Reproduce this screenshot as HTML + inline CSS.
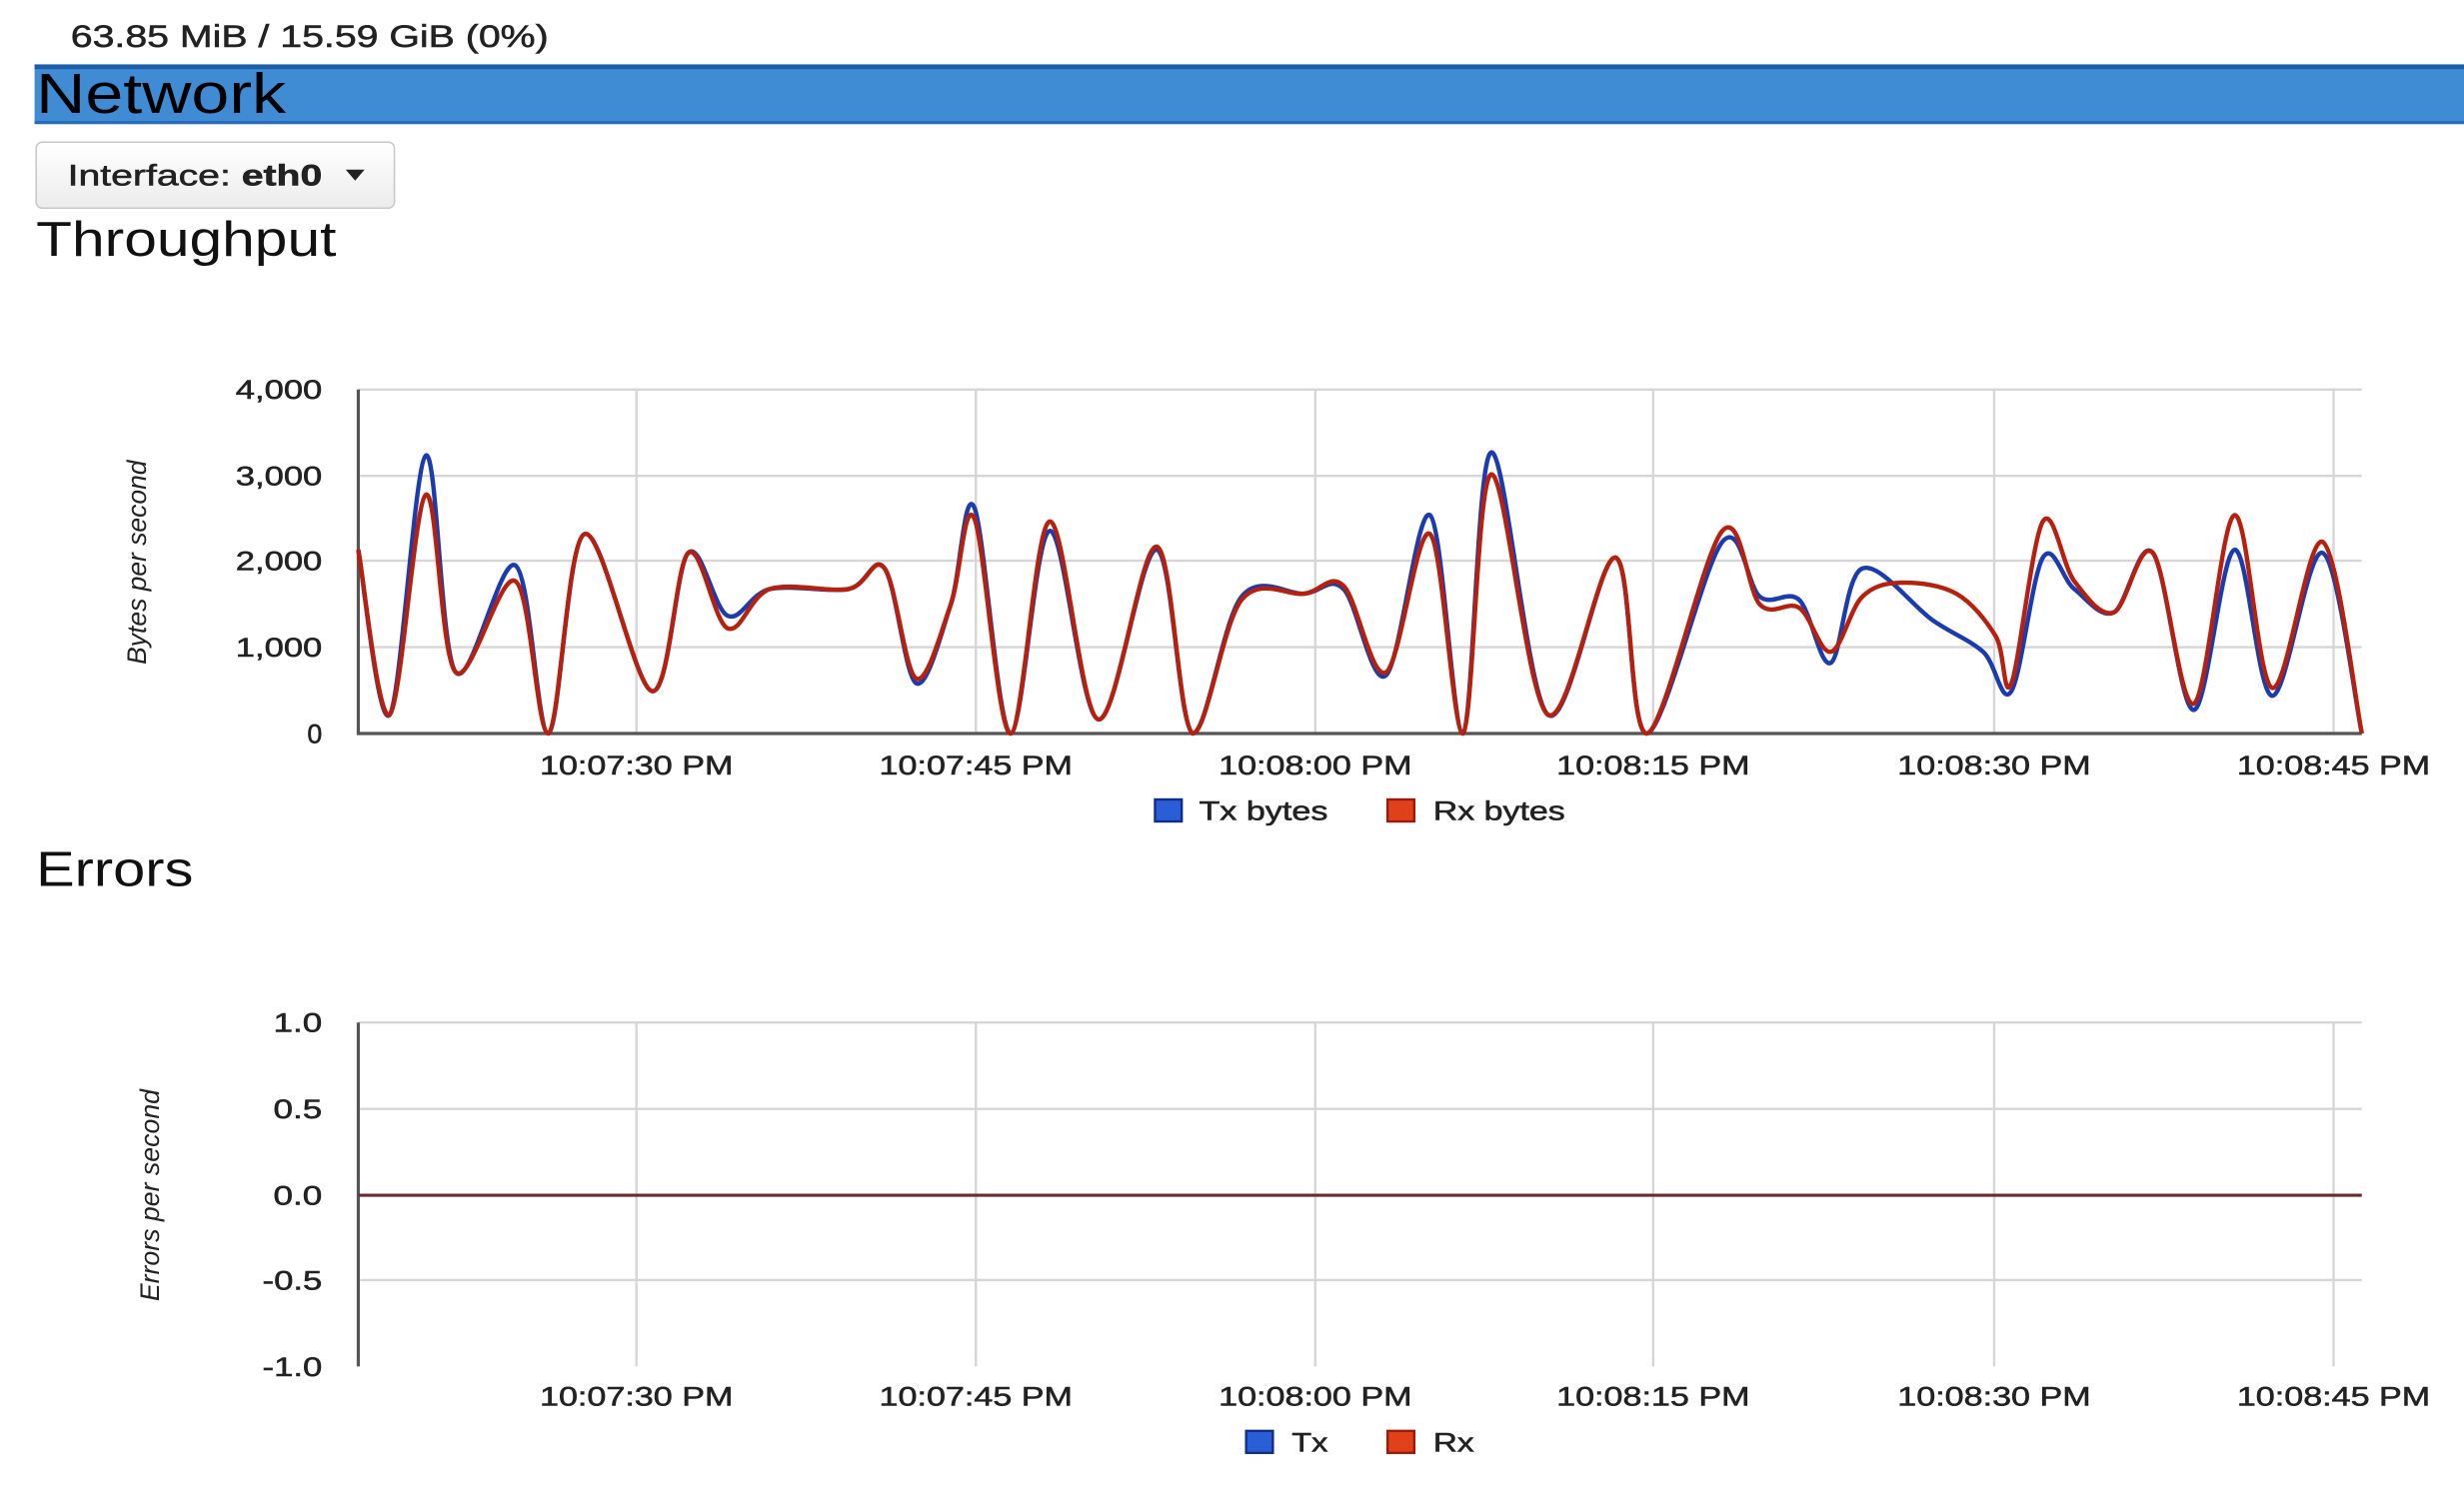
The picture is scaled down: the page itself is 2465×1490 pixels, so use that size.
<!DOCTYPE html>
<html><head><meta charset="utf-8"><style>
html,body{margin:0;padding:0;background:#fff;width:2465px;height:1490px;overflow:hidden}
svg{display:block}
text{font-family:"Liberation Sans",sans-serif}
.b{stroke:#222;stroke-width:0.35}
</style></head><body>
<svg id="s" width="2465" height="1490" viewBox="0 0 1568 948" preserveAspectRatio="none">
<defs><linearGradient id="bg" x1="0" y1="0" x2="0" y2="1"><stop offset="0" stop-color="#ffffff"/><stop offset="1" stop-color="#ececec"/></linearGradient></defs>
<text class="b" x="45" y="30" font-size="20" fill="#222" textLength="304" lengthAdjust="spacingAndGlyphs">63.85 MiB / 15.59 GiB (0%)</text>
<rect x="22" y="41" width="1546" height="38" fill="#3f8cd4"/>
<rect x="22" y="41" width="1546" height="3" fill="#1d5ea8"/>
<rect x="22" y="77" width="1546" height="2" fill="#2a6cb5"/>
<text x="23" y="72" font-size="36" fill="#000" textLength="159" lengthAdjust="spacingAndGlyphs">Network</text>
<rect x="23" y="90.5" width="228" height="42" rx="4" fill="url(#bg)" stroke="#c8c8c8"/>
<text class="b" x="43" y="118" font-size="19" fill="#222" textLength="162" lengthAdjust="spacingAndGlyphs">Interface: <tspan font-weight="bold">eth0</tspan></text>
<path d="M220 108 L232 108 L226 115 Z" fill="#222"/>
<text x="23" y="163" font-size="31" fill="#111" textLength="191" lengthAdjust="spacingAndGlyphs">Throughput</text>
<text x="23" y="564" font-size="31" fill="#111" textLength="100" lengthAdjust="spacingAndGlyphs">Errors</text>

<g stroke="#d6d6d6" stroke-width="1.5" fill="none">
<path d="M228 248H1503M228 303H1503M228 357H1503M228 412H1503"/>
<path d="M405 248V467M621 248V467M837 248V467M1052 248V467M1269 248V467M1485 248V467"/>
<path d="M228 651H1503M228 706H1503M228 815H1503"/>
<path d="M405 651V870M621 651V870M837 651V870M1052 651V870M1269 651V870M1485 651V870"/>
</g>
<g stroke="#555" stroke-width="2" fill="none">
<path d="M228 248V467H1503"/>
<path d="M228 651V870"/>
</g>
<path d="M228 761H1503" stroke="#6a2b2b" stroke-width="2"/>

<g font-size="17" fill="#222" text-anchor="end" class="b">
<text x="205" y="254" textLength="55" lengthAdjust="spacingAndGlyphs">4,000</text><text x="205" y="309" textLength="55" lengthAdjust="spacingAndGlyphs">3,000</text><text x="205" y="363" textLength="55" lengthAdjust="spacingAndGlyphs">2,000</text><text x="205" y="418" textLength="55" lengthAdjust="spacingAndGlyphs">1,000</text><text x="205" y="473">0</text>
<text x="205" y="657" textLength="31" lengthAdjust="spacingAndGlyphs">1.0</text><text x="205" y="712" textLength="31" lengthAdjust="spacingAndGlyphs">0.5</text><text x="205" y="767" textLength="31" lengthAdjust="spacingAndGlyphs">0.0</text><text x="205" y="821" textLength="38" lengthAdjust="spacingAndGlyphs">-0.5</text><text x="205" y="876" textLength="38" lengthAdjust="spacingAndGlyphs">-1.0</text>
</g>
<g font-size="17" fill="#222" text-anchor="middle" class="b">
<text x="405" y="493" textLength="123" lengthAdjust="spacingAndGlyphs">10:07:30 PM</text><text x="621" y="493" textLength="123" lengthAdjust="spacingAndGlyphs">10:07:45 PM</text><text x="837" y="493" textLength="123" lengthAdjust="spacingAndGlyphs">10:08:00 PM</text><text x="1052" y="493" textLength="123" lengthAdjust="spacingAndGlyphs">10:08:15 PM</text><text x="1269" y="493" textLength="123" lengthAdjust="spacingAndGlyphs">10:08:30 PM</text><text x="1485" y="493" textLength="123" lengthAdjust="spacingAndGlyphs">10:08:45 PM</text>
<text x="405" y="895" textLength="123" lengthAdjust="spacingAndGlyphs">10:07:30 PM</text><text x="621" y="895" textLength="123" lengthAdjust="spacingAndGlyphs">10:07:45 PM</text><text x="837" y="895" textLength="123" lengthAdjust="spacingAndGlyphs">10:08:00 PM</text><text x="1052" y="895" textLength="123" lengthAdjust="spacingAndGlyphs">10:08:15 PM</text><text x="1269" y="895" textLength="123" lengthAdjust="spacingAndGlyphs">10:08:30 PM</text><text x="1485" y="895" textLength="123" lengthAdjust="spacingAndGlyphs">10:08:45 PM</text>
</g>
<text transform="translate(93 358) rotate(-90)" font-size="17" font-style="italic" fill="#222" text-anchor="middle" textLength="130" lengthAdjust="spacingAndGlyphs">Bytes per second</text>
<text transform="translate(101 761) rotate(-90)" font-size="17" font-style="italic" fill="#222" text-anchor="middle" textLength="135" lengthAdjust="spacingAndGlyphs">Errors per second</text>

<g font-size="17" fill="#222" class="b">
<rect x="735" y="509" width="17" height="14" fill="#2a5ed6" stroke="#0f2d8a" stroke-width="1.5"/><text x="763" y="522" textLength="82" lengthAdjust="spacingAndGlyphs">Tx bytes</text>
<rect x="883" y="509" width="17" height="14" fill="#e0401a" stroke="#a01808" stroke-width="1.5"/><text x="912" y="522" textLength="84" lengthAdjust="spacingAndGlyphs">Rx bytes</text>
<rect x="793" y="911" width="17" height="14" fill="#2a5ed6" stroke="#0f2d8a" stroke-width="1.5"/><text x="822" y="924" textLength="23" lengthAdjust="spacingAndGlyphs">Tx</text>
<rect x="883" y="911" width="17" height="14" fill="#e0401a" stroke="#a01808" stroke-width="1.5"/><text x="912" y="924" textLength="26" lengthAdjust="spacingAndGlyphs">Rx</text>
</g>

<path id="tx" fill="none" stroke="#1a3cb0" stroke-width="2.8" stroke-linejoin="round"/>
<path id="rx" fill="none" stroke="#b8200e" stroke-width="2.8" stroke-linejoin="round"/>
</svg>
<script>
var tx=[[228,350],[248,455],[271,290],[290,428],[328,360],[349,467],[372,340],[415,440],[438,352],[463,392],[490,375],[540,375],[563,362],[583,435],[605,385],[620,323],[643,467],[668,338],[699,458],[736,350],[759,467],[790,380],[830,378],[855,375],[882,430],[910,328],[931,467],[949,288],[985,455],[1028,355],[1048,467],[1096,345],[1120,380],[1145,382],[1165,422],[1185,362],[1230,395],[1262,415],[1280,440],[1300,355],[1320,375],[1345,390],[1370,352],[1396,452],[1422,350],[1446,443],[1478,352],[1503,467]];
var rx=[[228,350],[248,455],[271,315],[290,428],[328,370],[349,467],[372,340],[415,440],[438,352],[463,400],[490,375],[540,375],[563,362],[583,432],[605,385],[620,330],[643,467],[668,332],[699,458],[736,348],[759,467],[790,382],[830,378],[855,373],[882,428],[910,340],[931,467],[949,302],[985,455],[1028,355],[1048,467],[1096,338],[1120,385],[1145,387],[1165,415],[1185,380],[1210,371],[1245,378],[1270,405],[1280,435],[1300,332],[1320,370],[1345,390],[1370,352],[1396,448],[1422,328],[1446,438],[1478,345],[1503,467]];
function sm(p){var d="M"+p[0][0]+" "+p[0][1];for(var i=0;i<p.length-1;i++){var a=p[Math.max(i-1,0)],b=p[i],c=p[i+1],e=p[Math.min(i+2,p.length-1)];var c1x=b[0]+(c[0]-a[0])/6,c1y=b[1]+(c[1]-a[1])/6,c2x=c[0]-(e[0]-b[0])/6,c2y=c[1]-(e[1]-b[1])/6;c1y=Math.min(c1y,467);c2y=Math.min(c2y,467);d+=" C"+c1x+" "+c1y+" "+c2x+" "+c2y+" "+c[0]+" "+c[1];}return d;}
document.getElementById("tx").setAttribute("d",sm(tx));
document.getElementById("rx").setAttribute("d",sm(rx));
</script>
</body></html>
